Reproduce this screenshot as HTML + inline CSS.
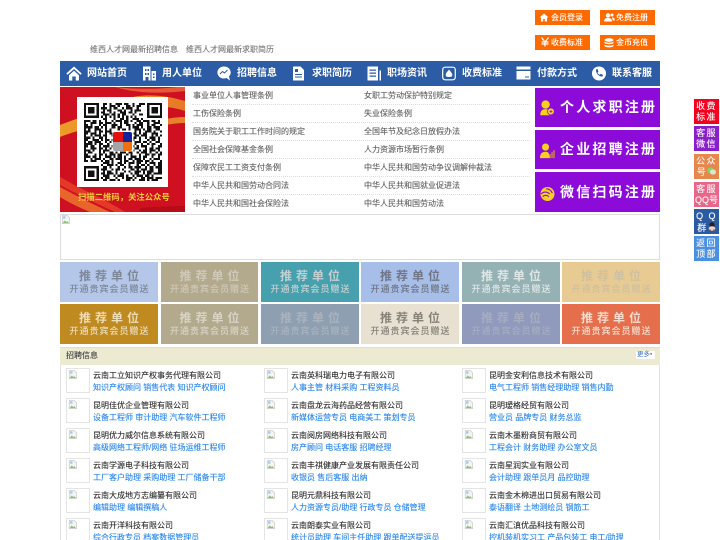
<!DOCTYPE html>
<html lang="zh-CN"><head><meta charset="utf-8"><title>维西人才网</title>
<style>
html,body{margin:0;padding:0;background:#fff;width:720px;height:540px;overflow:hidden}
body{position:relative;font-family:"Liberation Sans","Noto Sans CJK SC",sans-serif;font-size:8px;line-height:12px}
#w{position:absolute;left:0;top:0;width:720px;height:540px;overflow:hidden;filter:blur(.2px)}
.a{position:absolute;left:0;top:0;width:720px;height:540px;overflow:hidden}
.t{position:absolute;white-space:nowrap}
.tb{position:absolute;width:55px;height:15px;background:#ff6a00;color:#fff;line-height:15px;text-shadow:0 0 .4px #fff}
.tb span{position:absolute;left:16px;top:0;white-space:nowrap}
.tb svg{position:absolute;left:4px;top:3px}
#nav{position:absolute;left:60px;top:61px;width:600px;height:25px;background:#2b5ca5}
#nav b{position:absolute;top:0;line-height:25px;font-size:10px;color:#fff;white-space:nowrap}
#nav svg{position:absolute}
.l{position:absolute;color:#666;white-space:nowrap;text-shadow:0 0 .4px #888}
.dl{position:absolute;left:192px;width:338px;height:0;border-top:1px dotted #ddd}
.pb{position:absolute;left:535px;width:125px;background:#8d0bd8;color:#fff;font-weight:bold;font-size:14px;letter-spacing:2.2px;white-space:nowrap}
.pb span{position:absolute;left:25px;top:0}
.pb svg{position:absolute;left:5px}
.sd{position:absolute;left:694px;width:25px;color:#f4f4f4;font-size:9px;line-height:10.5px;text-align:center;letter-spacing:1.4px;padding-top:2px;box-sizing:border-box;white-space:nowrap;text-shadow:0 0 .4px #fff}
.rc{position:absolute;text-align:center;overflow:hidden}
.rc b{display:block;font-size:12px;letter-spacing:4px;line-height:14px;margin-top:7px;padding-left:4px}
.rc i{display:block;font-style:normal;font-size:9px;letter-spacing:1px;line-height:11px;margin-top:1px;padding-left:1px;text-shadow:0 0 .4px currentColor}
.lg{position:absolute;width:24px;height:25px;border:1px solid #e4e4e4;box-sizing:border-box;background:#fff}
.lg svg{position:absolute;left:1px;top:1px}
.n{position:absolute;color:#333;white-space:nowrap;text-shadow:0 0 .4px #666}
.j{position:absolute;color:#2f88ea;white-space:nowrap;text-shadow:0 0 .4px #5aa5f0}
</style></head><body><div id="w">
<svg width="0" height="0" style="position:absolute"><defs>
<g id="bk"><path d="M1.500 .5h6l3 3v7h-9z" fill="#f4f6f4" stroke="#c4c4c4" stroke-width=".8"/><path d="M2 10l2.500-3.500 2 2 1.500-1 1.500 2.500z" fill="#8fc07a"/><path d="M2.500 1.500h3v3h-3z" fill="#a8c8ec"/></g>
</defs></svg>

<div class="t" style="left:90px;top:44px;color:#777;text-shadow:0 0 .4px #999">维西人才网最新招聘信息</div>
<div class="t" style="left:186px;top:44px;color:#777;text-shadow:0 0 .4px #999">维西人才网最新求职简历</div>

<div class="tb" style="left:535px;top:10px"><svg width="10" height="9" viewBox="0 0 10 9"><path d="M5 .5L.5 4.500h1.500v4h2.200v-2.500h1.600v2.500h2.200v-4h1.500z" fill="#fff"/></svg><span>会员登录</span></div>
<div class="tb" style="left:600px;top:10px"><svg width="11" height="9" viewBox="0 0 11 9"><circle cx="4" cy="2.500" r="2.200" fill="#fff"/><path d="M0 8.500c0-3 2-3.500 4-3.500s4 .5 4 3.500z" fill="#fff"/><circle cx="8" cy="2" r="1.500" fill="#fff"/><path d="M8 4.500c2 0 2.800 1 2.800 3h-2z" fill="#fff"/></svg><span>免费注册</span></div>
<div class="tb" style="left:535px;top:35px"><svg width="10" height="10" viewBox="0 0 10 10" style="left:5px;top:2px"><path d="M1.500 .5L5 5l3.500-4.500M1.500 5h7M1.500 7h7M5 5v4.500" fill="none" stroke="#fff" stroke-width="1.200"/></svg><span>收费标准</span></div>
<div class="tb" style="left:600px;top:35px"><svg width="10" height="10" viewBox="0 0 10 10"><ellipse cx="5" cy="2" rx="4.500" ry="1.700" fill="#fff"/><path d="M.5 3.500c1 1.600 8 1.600 9 0v1.500c-1 1.600-8 1.600-9 0zM.5 6.500c1 1.600 8 1.600 9 0v1.500c-1 1.800-8 1.800-9 0z" fill="#fff"/></svg><span>金币充值</span></div>

<div id="nav">
<svg style="left:6px;top:5px" width="16" height="15" viewBox="0 0 16 15"><path d="M8 .5L.3 7.500l1.200 1.200L8 3l6.500 5.700 1.200-1.200zM3 9.200L8 4.800l5 4.400V14.500H9.700v-4H6.300v4H3z" fill="#fff"/></svg>
<b style="left:27px">网站首页</b>
<svg style="left:83px;top:5px" width="13" height="15" viewBox="0 0 13 15"><path d="M0 .5h7.500v14H0zM8.500 5H13v9.500H8.500z" fill="#fff"/><path d="M2 3h1.500v2H2zM4.500 3H6v2H4.500zM2 7h1.500v2H2zM4.500 7H6v2H4.500zM2.500 11h3v3.500h-3zM10 7.500h1.500v1.500H10zM10 10.500h1.500V12H10z" fill="#2b5ca5"/></svg>
<b style="left:102px">用人单位</b>
<svg style="left:157px;top:5px" width="15" height="15" viewBox="0 0 15 15"><path d="M7 .5a6.500 6 0 1 0 2.500 11.500l3.500 2.500-1-4A6.500 6 0 0 0 7 .5z" fill="#fff"/><path d="M3 8l2.500-2.500 2 1.500 3-3" fill="none" stroke="#2b5ca5" stroke-width="1"/></svg>
<b style="left:177px">招聘信息</b>
<svg style="left:233px;top:5px" width="11" height="15" viewBox="0 0 11 15"><path d="M0 .5h7.500L11 4v10.500H0z" fill="#fff"/><path d="M2 3h3v3H2zM2 8h7v1H2zM2 10.500h7v1H2z" fill="#2b5ca5"/></svg>
<b style="left:252px">求职简历</b>
<svg style="left:307px;top:5px" width="15" height="15" viewBox="0 0 15 15"><path d="M.5.500h10.500v14H.5z" fill="#fff"/><path d="M2.500 3.500h6.500v1.200H2.500zM2.500 6.500h6.500v1.200H2.500zM2.500 9.500h6.500v1.200H2.500z" fill="#2b5ca5"/><path d="M12.500 4.500h1.500v10h-1.500z" fill="#fff"/></svg>
<b style="left:327px">职场资讯</b>
<svg style="left:382px;top:5px" width="14" height="15" viewBox="0 0 14 15"><rect x=".7" y="1.200" width="12.600" height="12.600" rx="2.500" fill="none" stroke="#fff" stroke-width="1.200"/><path d="M7 3.500c1 1.500 3.300 3.500 3.300 5.500 0 1.500-1 2-3.300 2s-3.300-.5-3.300-2c0-2 2.300-4 3.300-5.500z" fill="#fff"/></svg>
<b style="left:402px">收费标准</b>
<svg style="left:456px;top:5px" width="15" height="14" viewBox="0 0 15 14"><path d="M.5.500H14.500V3.500H.5zM.5 5H14.500v8.500H.5z" fill="#fff"/><path d="M9 10.500h4v1H9z" fill="#2b5ca5"/></svg>
<b style="left:477px">付款方式</b>
<svg style="left:532px;top:5px" width="14" height="15" viewBox="0 0 14 15"><circle cx="7" cy="7.500" r="7" fill="#fff"/><path d="M4 3.500l1.500-.5 1 2.500-1 1c.4 1 1.200 1.800 2.300 2.300l1-1 2.200 1.200-.5 1.500c-3.500.5-7-3.500-6.500-7z" fill="#2b5ca5"/></svg>
<b style="left:552px">联系客服</b>
</div>

<svg style="position:absolute;left:60px;top:87px" width="125" height="125" viewBox="0 0 125 125">
<defs><linearGradient id="g" x1="0" y1="0" x2="1" y2="0"><stop offset="0" stop-color="#f2b52a"/><stop offset="1" stop-color="#ec8a2a"/></linearGradient></defs>
<rect width="125" height="125" fill="#cf1020"/>
<path d="M0 38C20 30 45 24 60 14 80 5 105 8 125 14V24C100 16 82 20 65 28 45 38 20 42 0 50z" fill="url(#g)" opacity=".85"/>
<path d="M55 0c25 3 50 2 70-1v5C100 7 75 6 55 0z" fill="#ee7a40" opacity=".7"/>
<path d="M105 32c7-1 13-2 20-2v6c-7 0-13 1-20 2z" fill="#e8a030" opacity=".8"/>
<path d="M0 100c15 8 30 16 50 25H30C18 120 8 115 0 110z" fill="#ef7a30" opacity=".8"/>
<path d="M0 90c20 12 45 22 65 35H55C35 116 15 106 0 98z" fill="#e8402a" opacity=".85"/>
<path d="M80 121c15-1 30-2 45-2v6H80z" fill="#b50c18"/>
</svg>
<div class="t" style="left:78px;top:191px;color:#f2cf3a;font-weight:bold;font-size:8.300px;letter-spacing:.05px">扫描二维码，关注公众号</div>
<div style="position:absolute;left:77px;top:97px;width:91px;height:90px;background:#fff"></div>
<svg style="position:absolute;left:84px;top:103px" width="78" height="78" viewBox="0 0 37 37" shape-rendering="crispEdges">
<g fill="none" stroke="#111" stroke-width="1">
<path d="M0 .5h37" stroke-dasharray="0 9 2 1 1 2 3 1 2 2 1 2 3 8"/>
<path d="M0 1.500h37" stroke-dasharray="0 9 1 2 3 1 1 3 2 1 1 1 2 10"/>
<path d="M0 2.500h37" stroke-dasharray="0 8 3 1 1 1 2 2 1 1 3 2 1 11"/>
<path d="M0 3.500h37" stroke-dasharray="0 9 1 1 2 3 2 1 1 2 1 1 3 10"/>
<path d="M0 4.500h37" stroke-dasharray="0 8 2 2 1 1 1 2 3 1 2 1 1 12"/>
<path d="M0 5.500h37" stroke-dasharray="0 9 3 1 2 1 1 1 2 3 1 2 2 9"/>
<path d="M0 6.500h37" stroke-dasharray="0 8 1 1 1 1 1 1 1 1 1 1 1 1 1 1 1 1 1 11"/>
<path d="M0 7.500h37" stroke-dasharray="0 9 2 3 1 2 2 1 1 2 3 1 1 9"/>
<path d="M0 8.500h37" stroke-dasharray="3 1 2 1 1 2 1 2 1 1 3 1 2 1 1 2 2 1 3 1 2 1 1"/>
<path d="M0 9.500h37" stroke-dasharray="1 2 3 1 2 1 3 1 1 2 1 1 2 3 1 1 2 2 1 2 3 1"/>
<path d="M0 10.500h37" stroke-dasharray="2 1 1 3 1 1 2 2 3 1 1 2 2 1 1 1 3 2 1 1 2 2 1"/>
<path d="M0 11.500h37" stroke-dasharray="4 1 2 1 1 1 1 2 2 1 2 3 1 1 3 1 1 2 2 1 3"/>
<path d="M0 12.500h37" stroke-dasharray="1 1 1 2 3 2 1 1 1 3 1 1 2 1 1 2 3 1 1 1 2 2 2"/>
<path d="M0 13.500h37" stroke-dasharray="3 2 1 1 2 1 3 1 1 1 2 2 1 3 1 1 1 2 3 1 1 2 1"/>
<path d="M0 14.500h37" stroke-dasharray="2 1 3 1 1 2 1 1 2 3 1 1 3 1 2 1 1 1 2 2 3"/>
<path d="M0 15.500h37" stroke-dasharray="1 2 1 1 3 1 2 2 1 1 3 1 1 2 1 1 2 1 3 2 1 1 1"/>
<path d="M0 16.500h37" stroke-dasharray="3 1 1 2 2 1 1 3 1 2 1 1 2 1 3 1 1 2 1 1 3 1 1"/>
<path d="M0 17.500h37" stroke-dasharray="2 2 3 1 1 1 2 1 3 1 1 2 1 1 2 2 1 3 1 1 2 1 1"/>
<path d="M0 18.500h37" stroke-dasharray="1 1 2 1 3 2 1 1 1 2 3 1 1 2 1 1 3 1 2 1 1 2 2"/>
<path d="M0 19.500h37" stroke-dasharray="4 1 1 1 2 2 1 3 1 1 2 1 3 1 1 2 1 2 1 1 2 2 1"/>
<path d="M0 20.500h37" stroke-dasharray="2 1 2 2 1 1 3 1 2 1 1 3 1 1 2 1 1 1 3 2 1 2"/>
<path d="M0 21.500h37" stroke-dasharray="1 2 3 1 2 1 1 1 1 2 2 1 3 1 1 1 2 3 1 1 2 1 2"/>
<path d="M0 22.500h37" stroke-dasharray="3 1 1 2 1 1 3 2 1 1 2 1 1 3 1 2 1 1 2 1 3 1 1"/>
<path d="M0 23.500h37" stroke-dasharray="1 1 2 3 1 1 1 2 2 1 1 1 3 1 2 2 1 1 3 1 1 2 1"/>
<path d="M0 24.500h37" stroke-dasharray="2 3 1 1 2 1 1 1 3 1 2 2 1 1 1 3 1 2 2 1 2 1"/>
<path d="M0 25.500h37" stroke-dasharray="3 1 2 1 1 2 3 1 1 1 2 1 1 2 3 1 1 1 2 2 1 2 1"/>
<path d="M0 26.500h37" stroke-dasharray="1 2 1 1 3 1 1 2 2 1 3 1 1 1 2 1 3 1 1 2 1 1 3"/>
<path d="M0 27.500h37" stroke-dasharray="2 1 3 2 1 1 2 1 1 3 1 1 2 2 1 1 3 1 2 1 1 3"/>
<path d="M0 28.500h37" stroke-dasharray="0 9 3 1 1 2 2 1 1 1 3 1 2 2 1 1 3 1 2"/>
<path d="M0 29.500h37" stroke-dasharray="0 8 1 2 3 1 1 1 2 2 1 3 1 1 2 1 1 2 1 1 2"/>
<path d="M0 30.500h37" stroke-dasharray="0 9 2 1 1 3 1 2 1 1 2 1 3 2 1 1 2 1 3"/>
<path d="M0 31.500h37" stroke-dasharray="0 8 3 2 1 1 2 1 1 3 2 1 1 1 3 1 2 2 2"/>
<path d="M0 32.500h37" stroke-dasharray="0 9 1 1 2 2 1 3 1 1 1 2 3 1 1 1 3 2 1"/>
<path d="M0 33.500h37" stroke-dasharray="0 8 2 1 3 1 1 1 2 3 1 1 2 2 1 1 2 1 3"/>
<path d="M0 34.500h37" stroke-dasharray="0 9 3 2 1 1 3 1 1 2 1 1 3 1 2 1 1 3"/>
<path d="M0 35.500h37" stroke-dasharray="0 8 1 1 2 3 1 2 1 1 3 1 1 2 2 1 3 1 1"/>
<path d="M0 36.500h37" stroke-dasharray="0 9 2 1 3 1 1 3 2 1 1 2 3 1 1 1 3 1"/>
</g>
<g fill="#111"><path fill-rule="evenodd" d="M0 0h7v7H0zM1 1v5h5V1z"/><path d="M2 2h3v3H2z"/>
<path fill-rule="evenodd" d="M30 0h7v7h-7zM31 1v5h5V1z"/><path d="M32 2h3v3h-3z"/>
<path fill-rule="evenodd" d="M0 30h7v7H0zM1 31v5h5v-5z"/><path d="M2 32h3v3H2z"/></g>
<rect x="13.500" y="13" width="10" height="10" fill="#fff"/>
</svg>
<div style="position:absolute;left:113px;top:132px;width:9.500px;height:9.500px;background:#e40f10;border-radius:2px 0 0 0"></div>
<div style="position:absolute;left:122.500px;top:132px;width:9.500px;height:9.500px;background:#15249a;border-radius:0 2px 0 0"></div>
<div style="position:absolute;left:113px;top:141.500px;width:9.500px;height:9.500px;background:#a5a5a5;border-radius:0 0 0 2px"></div>
<div style="position:absolute;left:122.500px;top:141.500px;width:9.500px;height:9.500px;background:#f0700f;border-radius:0 0 2px 0"></div>

<div class="dl" style="top:104px"></div><div class="dl" style="top:122px"></div><div class="dl" style="top:140px"></div><div class="dl" style="top:158px"></div><div class="dl" style="top:176px"></div><div class="dl" style="top:194px"></div>
<div class="l" style="left:193px;top:90px">事业单位人事管理条例</div><div class="l" style="left:364px;top:90px">女职工劳动保护特别规定</div>
<div class="l" style="left:193px;top:108px">工伤保险条例</div><div class="l" style="left:364px;top:108px">失业保险条例</div>
<div class="l" style="left:193px;top:126px">国务院关于职工工作时间的规定</div><div class="l" style="left:364px;top:126px">全国年节及纪念日放假办法</div>
<div class="l" style="left:193px;top:144px">全国社会保障基金条例</div><div class="l" style="left:364px;top:144px">人力资源市场暂行条例</div>
<div class="l" style="left:193px;top:162px">保障农民工工资支付条例</div><div class="l" style="left:364px;top:162px">中华人民共和国劳动争议调解仲裁法</div>
<div class="l" style="left:193px;top:180px">中华人民共和国劳动合同法</div><div class="l" style="left:364px;top:180px">中华人民共和国就业促进法</div>
<div class="l" style="left:193px;top:198px">中华人民共和国社会保险法</div><div class="l" style="left:364px;top:198px">中华人民共和国劳动法</div>

<div class="pb" style="top:88px;height:39px;line-height:39px"><svg style="top:12px" width="15" height="16" viewBox="0 0 19 21"><circle cx="7" cy="6" r="5.500" fill="#f5d020"/><path d="M0 20c0-6 3-8 7-8s6 2 6 8z" fill="#f5d020"/><circle cx="14" cy="15" r="4.500" fill="#f5d020" stroke="#8d0bd8"/><path d="M12 15h4M14 13v4" stroke="#8d0bd8"/></svg><span>个人求职注册</span></div>
<div class="pb" style="top:130px;height:39px;line-height:39px"><svg style="top:13px" width="15" height="16" viewBox="0 0 19 20"><circle cx="7" cy="5" r="4.500" fill="#f5d020"/><path d="M0 19c0-6 3-8 7-8s5 2 5 8z" fill="#f5d020"/><path d="M12 14h1.500v5H12zM14.500 11.500H16V19h-1.500zM17 9h1.500v10H17z" fill="#e0a020"/></svg><span>企业招聘注册</span></div>
<div class="pb" style="top:172px;height:40px;line-height:40px"><svg style="top:15px;left:5px" width="15" height="14" viewBox="0 0 17 16"><circle cx="8.500" cy="8" r="8" fill="#f5d020"/><path d="M1 8c3-3 7-3 10 0M3 11c2-2 5-2 7 0M7 2c3 0 6 2 7 5" fill="none" stroke="#8d0bd8" stroke-width="1.300"/></svg><span>微信扫码注册</span></div>

<div style="position:absolute;left:60px;top:214px;width:600px;height:46px;border:1px solid #ddd;box-sizing:border-box"><svg style="position:absolute;left:0;top:0" width="9" height="9" viewBox="0 0 11 11"><use href="#bk"/></svg></div>

<div class="rc" style="left:60px;top:262px;width:98px;height:40px;background:#b5c7e9;color:#7d8798"><b>推荐单位</b><i>开通贵宾会员赠送</i></div>
<div class="rc" style="left:161px;top:262px;width:97px;height:40px;background:#b3aa8e;color:#cfc9b8"><b>推荐单位</b><i>开通贵宾会员赠送</i></div>
<div class="rc" style="left:261px;top:262px;width:98px;height:40px;background:#46a0ad;color:#c3d0d2"><b>推荐单位</b><i>开通贵宾会员赠送</i></div>
<div class="rc" style="left:361px;top:262px;width:98px;height:40px;background:#a7bee8;color:#6f7686"><b>推荐单位</b><i>开通贵宾会员赠送</i></div>
<div class="rc" style="left:462px;top:262px;width:98px;height:40px;background:#94b2b4;color:#dfe6e6"><b>推荐单位</b><i>开通贵宾会员赠送</i></div>
<div class="rc" style="left:562px;top:262px;width:98px;height:40px;background:#e8cb93;color:#cfc0a0"><b>推荐单位</b><i>开通贵宾会员赠送</i></div>
<div class="rc" style="left:60px;top:304px;width:98px;height:40px;background:#bf8a1f;color:#ecdcb8"><b>推荐单位</b><i>开通贵宾会员赠送</i></div>
<div class="rc" style="left:161px;top:304px;width:97px;height:40px;background:#b3aa8e;color:#d8d3c4"><b>推荐单位</b><i>开通贵宾会员赠送</i></div>
<div class="rc" style="left:261px;top:304px;width:98px;height:40px;background:#8e9fb1;color:#aab3bd"><b>推荐单位</b><i>开通贵宾会员赠送</i></div>
<div class="rc" style="left:361px;top:304px;width:98px;height:40px;background:#e8e1d1;color:#85827a"><b>推荐单位</b><i>开通贵宾会员赠送</i></div>
<div class="rc" style="left:462px;top:304px;width:98px;height:40px;background:#8f9abd;color:#a7acc0"><b>推荐单位</b><i>开通贵宾会员赠送</i></div>
<div class="rc" style="left:562px;top:304px;width:98px;height:40px;background:#e56f4c;color:#f6dccf"><b>推荐单位</b><i>开通贵宾会员赠送</i></div>

<div style="position:absolute;left:60px;top:347px;width:600px;height:200px;border:1px solid #e2e2e2;box-sizing:border-box"></div>
<div style="position:absolute;left:60px;top:347px;width:600px;height:18px;background:#ecead0;border-top:1px solid #ddd;box-sizing:border-box"></div>
<div class="t" style="left:66px;top:350px;color:#444;text-shadow:0 0 .4px #666">招聘信息</div>
<div style="position:absolute;left:636px;top:351px;width:19px;height:8px;background:#fff;border-radius:1px;color:#3a6fc0;font-size:6.500px;line-height:8px;padding-left:1px;box-sizing:border-box">更多<span style="color:#e05050">▪</span></div>

<div class="a" id="list">
<div class="lg" style="left:66px;top:368px"><svg width="9" height="9" viewBox="0 0 11 11"><use href="#bk"/></svg></div><div class="n" style="left:93px;top:370px">云南工立知识产权事务代理有限公司</div><div class="j" style="left:93px;top:382px">知识产权顾问 销售代表 知识产权顾问</div>
<div class="lg" style="left:264px;top:368px"><svg width="9" height="9" viewBox="0 0 11 11"><use href="#bk"/></svg></div><div class="n" style="left:291px;top:370px">云南英科瑞电力电子有限公司</div><div class="j" style="left:291px;top:382px">人事主管 材料采购 工程资料员</div>
<div class="lg" style="left:462px;top:368px"><svg width="9" height="9" viewBox="0 0 11 11"><use href="#bk"/></svg></div><div class="n" style="left:489px;top:370px">昆明金安利信息技术有限公司</div><div class="j" style="left:489px;top:382px">电气工程师 销售经理助理 销售内勤</div>

<div class="lg" style="left:66px;top:398px"><svg width="9" height="9" viewBox="0 0 11 11"><use href="#bk"/></svg></div><div class="n" style="left:93px;top:400px">昆明佳优企业管理有限公司</div><div class="j" style="left:93px;top:412px">设备工程师 审计助理 汽车软件工程师</div>
<div class="lg" style="left:264px;top:398px"><svg width="9" height="9" viewBox="0 0 11 11"><use href="#bk"/></svg></div><div class="n" style="left:291px;top:400px">云南盘龙云海药品经营有限公司</div><div class="j" style="left:291px;top:412px">新媒体运营专员 电商美工 策划专员</div>
<div class="lg" style="left:462px;top:398px"><svg width="9" height="9" viewBox="0 0 11 11"><use href="#bk"/></svg></div><div class="n" style="left:489px;top:400px">昆明瑷格经贸有限公司</div><div class="j" style="left:489px;top:412px">营业员 品牌专员 财务总监</div>

<div class="lg" style="left:66px;top:428px"><svg width="9" height="9" viewBox="0 0 11 11"><use href="#bk"/></svg></div><div class="n" style="left:93px;top:430px">昆明优力威尔信息系统有限公司</div><div class="j" style="left:93px;top:442px">高级网络工程师/网络 驻场运维工程师</div>
<div class="lg" style="left:264px;top:428px"><svg width="9" height="9" viewBox="0 0 11 11"><use href="#bk"/></svg></div><div class="n" style="left:291px;top:430px">云南阅房网络科技有限公司</div><div class="j" style="left:291px;top:442px">房产顾问 电话客服 招聘经理</div>
<div class="lg" style="left:462px;top:428px"><svg width="9" height="9" viewBox="0 0 11 11"><use href="#bk"/></svg></div><div class="n" style="left:489px;top:430px">云南木墨粉商贸有限公司</div><div class="j" style="left:489px;top:442px">工程会计 财务助理 办公室文员</div>

<div class="lg" style="left:66px;top:458px"><svg width="9" height="9" viewBox="0 0 11 11"><use href="#bk"/></svg></div><div class="n" style="left:93px;top:460px">云南学源电子科技有限公司</div><div class="j" style="left:93px;top:472px">工厂客户助理 采购助理 工厂储备干部</div>
<div class="lg" style="left:264px;top:458px"><svg width="9" height="9" viewBox="0 0 11 11"><use href="#bk"/></svg></div><div class="n" style="left:291px;top:460px">云南丰祺健康产业发展有限责任公司</div><div class="j" style="left:291px;top:472px">收银员 售后客服 出纳</div>
<div class="lg" style="left:462px;top:458px"><svg width="9" height="9" viewBox="0 0 11 11"><use href="#bk"/></svg></div><div class="n" style="left:489px;top:460px">云南星润实业有限公司</div><div class="j" style="left:489px;top:472px">会计助理 跟单员月 品控助理</div>

<div class="lg" style="left:66px;top:488px"><svg width="9" height="9" viewBox="0 0 11 11"><use href="#bk"/></svg></div><div class="n" style="left:93px;top:490px">云南大成地方志编纂有限公司</div><div class="j" style="left:93px;top:502px">编辑助理 编辑撰稿人</div>
<div class="lg" style="left:264px;top:488px"><svg width="9" height="9" viewBox="0 0 11 11"><use href="#bk"/></svg></div><div class="n" style="left:291px;top:490px">昆明元鼎科技有限公司</div><div class="j" style="left:291px;top:502px">人力资源专员/助理 行政专员 仓储管理</div>
<div class="lg" style="left:462px;top:488px"><svg width="9" height="9" viewBox="0 0 11 11"><use href="#bk"/></svg></div><div class="n" style="left:489px;top:490px">云南金木棉进出口贸易有限公司</div><div class="j" style="left:489px;top:502px">泰语翻译 土地测绘员 钢筋工</div>

<div class="lg" style="left:66px;top:518px"><svg width="9" height="9" viewBox="0 0 11 11"><use href="#bk"/></svg></div><div class="n" style="left:93px;top:520px">云南开洋科技有限公司</div><div class="j" style="left:93px;top:532px">综合行政专员 档案数据管理员</div>
<div class="lg" style="left:264px;top:518px"><svg width="9" height="9" viewBox="0 0 11 11"><use href="#bk"/></svg></div><div class="n" style="left:291px;top:520px">云南朗泰实业有限公司</div><div class="j" style="left:291px;top:532px">统计员助理 车间主任助理 跟单配送提运员</div>
<div class="lg" style="left:462px;top:518px"><svg width="9" height="9" viewBox="0 0 11 11"><use href="#bk"/></svg></div><div class="n" style="left:489px;top:520px">云南汇滇优品科技有限公司</div><div class="j" style="left:489px;top:532px">控机装机实习工 产品包装工 电工/助理</div>
</div>

<div class="sd" style="top:99px;height:25px;background:#f5001f">收费<br>标准</div>
<div class="sd" style="top:126px;height:25px;background:#8a1fc9">客服<br>微信</div>
<div class="sd" style="top:154px;height:25px;background:#e8874c">公众<br>号<svg width="9" height="8" viewBox="0 0 9 8"><ellipse cx="3.500" cy="3.500" rx="3.300" ry="3" fill="#8fcf6a"/><ellipse cx="6" cy="5" rx="3" ry="2.600" fill="#d8e8d0"/></svg></div>
<div class="sd" style="top:182px;height:25px;background:#e8668a">客服<br><span style="letter-spacing:0">QQ号</span></div>
<div class="sd" style="top:209px;height:25px;background:#2a5aa2">Q Q<br>群<svg width="8" height="9" viewBox="0 0 8 9"><ellipse cx="4" cy="3" rx="2.600" ry="2.800" fill="#222"/><ellipse cx="4" cy="6.500" rx="3.300" ry="2.300" fill="#e9d5c8"/><path d="M1 8h2M5 8h2" stroke="#e05020"/></svg></div>
<div class="sd" style="top:236px;height:25px;background:#4a90e2">返回<br>顶部</div>
</div></body></html>
